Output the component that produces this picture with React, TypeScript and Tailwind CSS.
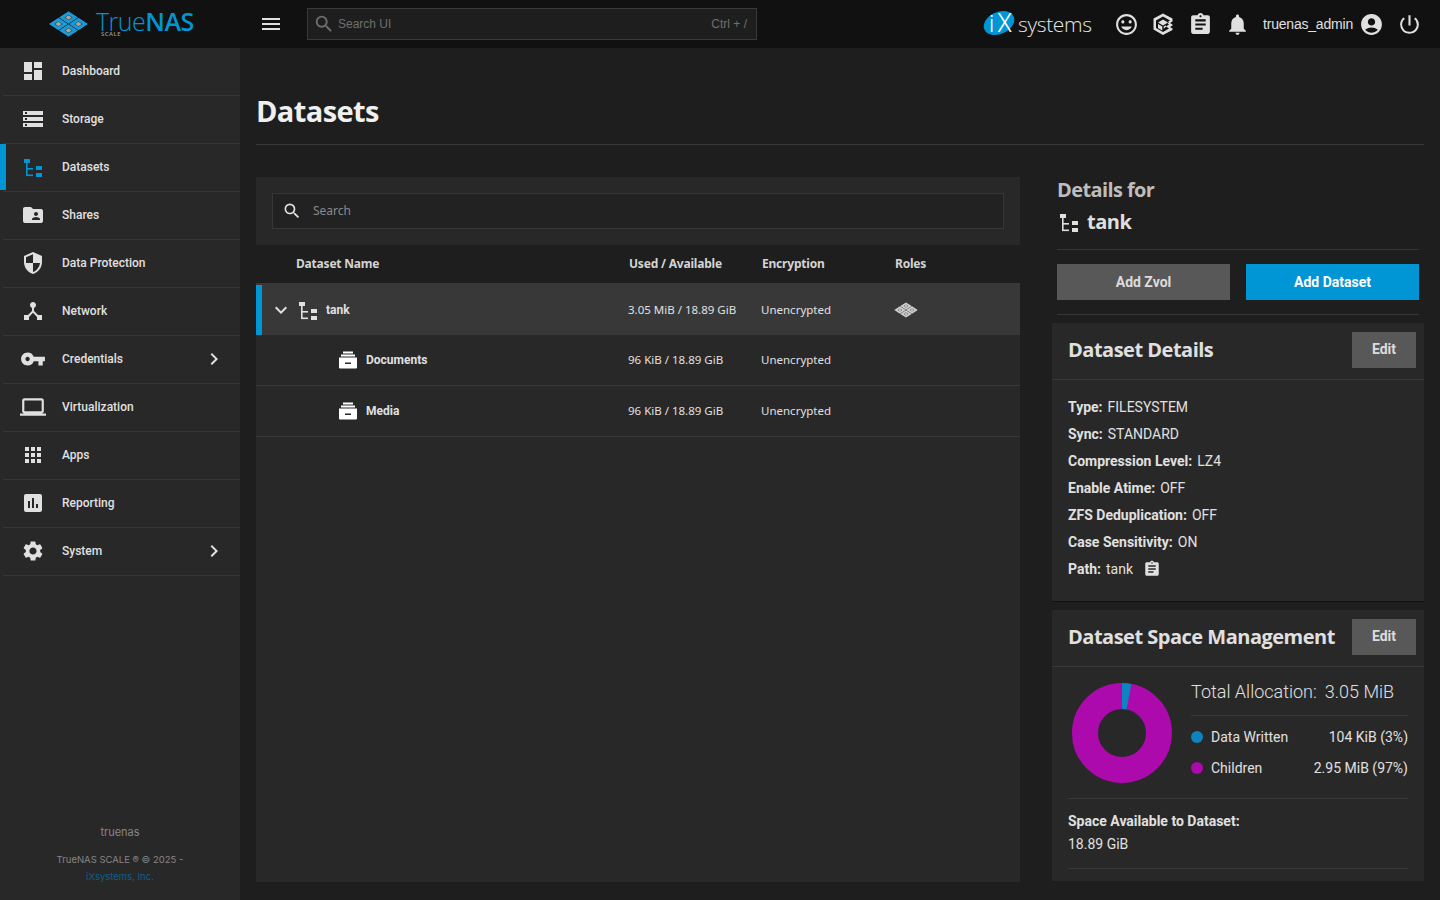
import type { ReactNode } from 'react'
import {
  MdAccountCircle,
  MdApps,
  MdAssessment,
  MdAssignment,
  MdChevronRight,
  MdDashboard,
  MdDeviceHub,
  MdExpandMore,
  MdFolderShared,
  MdLaptop,
  MdMenu,
  MdNotifications,
  MdPowerSettingsNew,
  MdSearch,
  MdSecurity,
  MdSettings,
  MdStorage,
  MdTagFaces,
  MdVpnKey,
} from 'react-icons/md'

function DatasetIcon({ className }: { className?: string }) {
  return (
    <svg viewBox="0 0 24 24" fill="currentColor" className={className}>
      <rect x="3" y="4" width="6" height="4" />
      <rect x="5" y="8" width="1.6" height="13" />
      <rect x="5" y="13" width="7" height="1.6" />
      <rect x="5" y="19.5" width="7" height="1.6" />
      <rect x="15" y="11" width="6" height="4" />
      <rect x="15" y="18" width="6" height="4" />
    </svg>
  )
}

function ArchiveIcon() {
  return (
    <svg viewBox="0 0 18 18" fill="currentColor" className="h-[18px] w-[18px]">
      <rect x="4" y="0.5" width="10" height="2" />
      <rect x="2" y="3.5" width="14" height="2" />
      <path fillRule="evenodd" d="M0 6.5h18v10a1 1 0 0 1-1 1H1a1 1 0 0 1-1-1zM6 11.5v1.4h6v-1.4z" />
    </svg>
  )
}

function TruenasMark({ className, frame, inner }: { className?: string; frame: string; inner: string }) {
  const cells = [
    [0.05, 0.05],
    [2.05, 0.05],
    [0.05, 2.05],
    [2.05, 2.05],
  ]
  return (
    <svg viewBox="0 0 40 26" className={className}>
      <g transform="matrix(5 3.25 -5 3.25 20 0)">
        {cells.map(([x, y]) => (
          <g key={`${x}-${y}`}>
            <path
              fill={frame}
              fillRule="evenodd"
              d={`M${x} ${y}h1.9v1.9h-1.9zM${x + 0.55} ${y + 0.55}v0.8h0.8v-0.8z`}
            />
            <rect x={x + 0.62} y={y + 0.62} width="0.66" height="0.66" fill={inner} />
          </g>
        ))}
      </g>
    </svg>
  )
}

function TrueCommandIcon() {
  return (
    <svg viewBox="0 0 24 24" className="h-6 w-6" fill="#e0e0e0">
      <path
        fillRule="evenodd"
        d="M12 1.5 21.5 6.5v3L19 11l2.500 1.500v1L19 15l2.500 1.500v1.500L12 23 2.500 17.500v-11zM12 4.500 5 8.500v7.500l7 4 6-3.500-3-2 3-2-1.500-1 1.500-1-1-.8 2-1.200z"
      />
      <path d="M12 7.500 17 10.500 12 13.500 7 10.500zM7 12l4.300 2.500v4L7 16zM12.700 14.500 15 13.200v1.500l-2.300 2z" />
    </svg>
  )
}

function IxLogo() {
  return (
    <svg viewBox="0 0 112 30" className="h-[30px] w-[112px]">
      <ellipse cx="16" cy="14" rx="16" ry="11" transform="rotate(-24 16 14)" fill="#0095d5" />
      <text x="6" y="23" fontFamily="Roboto, sans-serif" fontSize="23" fontWeight="300" fill="#fff">
        i
      </text>
      <text x="14" y="23" fontFamily="Roboto, sans-serif" fontSize="25" fontWeight="300" fill="#fff">
        X
      </text>
      <text x="35" y="23" fontFamily="'Open Sans', sans-serif" fontSize="21" fontWeight="300" fill="#e6e6e6" textLength="74">
        systems
      </text>
    </svg>
  )
}

const navItems: { label: string; icon: ReactNode; active?: boolean; more?: boolean }[] = [
  { label: 'Dashboard', icon: <MdDashboard size={24} /> },
  { label: 'Storage', icon: <MdStorage size={24} /> },
  { label: 'Datasets', icon: <DatasetIcon className="h-6 w-6 text-[#0095d5]" />, active: true },
  { label: 'Shares', icon: <MdFolderShared size={24} /> },
  { label: 'Data Protection', icon: <MdSecurity size={24} /> },
  { label: 'Network', icon: <MdDeviceHub size={24} /> },
  { label: 'Credentials', icon: <MdVpnKey size={26} />, more: true },
  { label: 'Virtualization', icon: <MdLaptop size={26} /> },
  { label: 'Apps', icon: <MdApps size={24} /> },
  { label: 'Reporting', icon: <MdAssessment size={24} /> },
  { label: 'System', icon: <MdSettings size={24} />, more: true },
]

function Sidebar() {
  return (
    <aside className="flex w-[240px] shrink-0 flex-col bg-[#282828] font-['Roboto',sans-serif]">
      {navItems.map((item) => (
        <div key={item.label} className="relative ml-[3px] flex h-12 items-center border-b border-[#363636] pb-px text-[#e0e0e0]">
          {item.active && <div className="absolute -left-[3px] top-0 bottom-px w-[6px] bg-[#0095d5]" />}
          <div className="flex w-[59px] items-center justify-center pl-[-1px]">{item.icon}</div>
          <span className="text-[12px] font-medium">{item.label}</span>
          {item.more && <MdChevronRight size={24} className="ml-auto mr-[14px]" />}
        </div>
      ))}
      <div className="mt-auto flex flex-col items-center pb-[15px] font-['Inter',sans-serif] text-[#868686]">
        <div className="text-[11px] leading-4">truenas</div>
        <div className="mt-[12px] text-[9.5px] leading-4">TrueNAS SCALE ® © 2025 -</div>
        <div className="mt-px text-[9.5px] leading-4 text-[#0d5f8a]">iXsystems, Inc.</div>
      </div>
    </aside>
  )
}

function Topbar() {
  return (
    <header className="flex h-12 items-center bg-[#111111] font-['Roboto',sans-serif] text-[#e0e0e0]">
      <div className="flex w-[240px] shrink-0 items-center pl-[48px]">
        <TruenasMark className="h-[26px] w-[41px]" frame="#1b9ad6" inner="#a8a8a8" />
        <div className="relative ml-[7px] -mt-[6px] font-['Open_Sans',sans-serif] text-[25px] leading-8 text-[#0095d5]">
          <span className="font-light tracking-[-0.5px]">True</span>
          <span className="font-semibold tracking-[-0.5px]">NAS</span>
          <span className="absolute left-[5px] top-[26px] text-[6px] font-semibold leading-none tracking-[0.5px] text-[#9a9a9a]">
            SCALE
          </span>
        </div>
      </div>
      <MdMenu size={24} className="ml-[19px]" />
      <div className="ml-[24px] flex h-8 w-[450px] items-center border border-[#3a3a3a] bg-[#1e1e1e] pl-[5px] pr-[9px] font-['Liberation_Sans',sans-serif] text-[12px] text-[#6f6f6f]">
        <MdSearch size={22} />
        <span className="ml-[3px]">Search UI</span>
        <span className="ml-auto">Ctrl + /</span>
      </div>
      <div className="ml-auto flex items-center pr-[18px]">
        <IxLogo />
        <MdTagFaces size={25} className="ml-[19px]" />
        <div className="ml-[12px]">
          <TrueCommandIcon />
        </div>
        <MdAssignment size={25} className="ml-[13px]" />
        <MdNotifications size={25} className="ml-[12px]" />
        <span className="ml-[13px] font-['Liberation_Sans',sans-serif] text-[14px] tracking-[-0.2px]">truenas_admin</span>
        <MdAccountCircle size={25} className="ml-[6px]" />
        <MdPowerSettingsNew size={25} className="ml-[13px]" />
      </div>
    </header>
  )
}

const rows = [
  { name: 'Documents', used: '96 KiB / 18.89 GiB' },
  { name: 'Media', used: '96 KiB / 18.89 GiB' },
]

function DatasetTree() {
  return (
    <section className="flex w-[764px] shrink-0 flex-col bg-[#282828] text-[#e0e0e0]">
      <div className="px-4 py-4">
        <div className="flex h-9 items-center border border-[#363636] bg-[#222222] pl-[9px] text-[12px] text-[#8a8a8a]">
          <MdSearch size={20} className="text-[#e0e0e0]" />
          <span className="ml-[11px] font-['Noto_Sans',sans-serif]">Search</span>
        </div>
      </div>
      <div className="flex h-[38px] items-center bg-[#1e1e1e] text-[12px] font-bold tracking-[-0.2px] text-[#d4d4d4]">
        <span className="ml-[40px] w-[333px]">Dataset Name</span>
        <span className="w-[133px]">Used / Available</span>
        <span className="w-[133px]">Encryption</span>
        <span>Roles</span>
      </div>
      <div className="flex h-[52px] items-center bg-[#383838] pt-[2px] font-['Noto_Sans',sans-serif] text-[11.5px]">
        <div className="flex h-[50px] w-[6px] items-center bg-[#0095d5]" />
        <MdExpandMore size={24} className="ml-[7px]" />
        <DatasetIcon className="ml-[3px] h-6 w-6" />
        <span className="ml-[6px] w-[302px] font-['Roboto',sans-serif] text-[12px] font-bold">tank</span>
        <span className="w-[133px]">3.05 MiB / 18.89 GiB</span>
        <span className="w-[133px]">Unencrypted</span>
        <TruenasMark className="h-[16px] w-[24px]" frame="#d0d0d0" inner="#d0d0d0" />
      </div>
      {rows.map((row) => (
        <div key={row.name} className="flex h-[51px] items-center border-b border-[#383838] font-['Noto_Sans',sans-serif] text-[11.5px]">
          <div className="ml-[83px] text-white">
            <ArchiveIcon />
          </div>
          <span className="ml-[9px] w-[262px] font-['Roboto',sans-serif] text-[12px] font-bold">{row.name}</span>
          <span className="w-[133px]">{row.used}</span>
          <span>Unencrypted</span>
        </div>
      ))}
    </section>
  )
}

function CardHeader({ title }: { title: string }) {
  return (
    <div className="flex h-[57px] items-center justify-between border-b border-[#383838] pl-4 pr-2 pb-[3px]">
      <h3 className="font-['Open_Sans',sans-serif] text-[20px] font-bold tracking-[-0.5px] text-[#e0e0e0]">{title}</h3>
      <button className="h-9 w-16 bg-[#585858] text-[14px] font-bold text-[#dcdcdc]">Edit</button>
    </div>
  )
}

const details: [string, string][] = [
  ['Type:', 'FILESYSTEM'],
  ['Sync:', 'STANDARD'],
  ['Compression Level:', 'LZ4'],
  ['Enable Atime:', 'OFF'],
  ['ZFS Deduplication:', 'OFF'],
  ['Case Sensitivity:', 'ON'],
]

function DetailsPanel() {
  return (
    <aside className="flex w-[372px] shrink-0 flex-col font-['Roboto',sans-serif] text-[14px] text-[#e0e0e0]">
      <div className="mx-[5px] border-b border-[#363636] pb-[14px]">
        <div className="font-['Open_Sans',sans-serif] text-[20px] font-bold leading-[26px] tracking-[-0.6px] text-[#bdbdbd]">
          Details for
        </div>
        <div className="mt-[6px] flex h-[26px] items-center font-['Open_Sans',sans-serif] text-[20px] font-bold tracking-[-0.5px]">
          <DatasetIcon className="mr-[6px] h-6 w-6 shrink-0" />
          tank
        </div>
      </div>
      <div className="mx-[5px] flex gap-4 border-b border-[#363636] py-[14px]">
        <button className="h-9 flex-1 bg-[#585858] font-bold text-[#dcdcdc]">Add Zvol</button>
        <button className="h-9 flex-1 bg-[#0095d5] font-bold text-white">Add Dataset</button>
      </div>
      <div className="mt-2 h-[279px] border-b border-[#111] bg-[#282828]">
        <CardHeader title="Dataset Details" />
        <div className="flex flex-col gap-[7px] px-4 pt-[17px] leading-5">
          {details.map(([label, value]) => (
            <div key={label}>
              <b className="mr-[5px]">{label}</b>
              {value}
            </div>
          ))}
          <div className="flex items-center">
            <b className="mr-[5px]">Path:</b>tank
            <MdAssignment size={18} className="ml-[10px]" />
          </div>
        </div>
      </div>
      <div className="mt-2 h-[271px] bg-[#282828]">
        <CardHeader title="Dataset Space Management" />
        <div className="mx-4 flex h-[132px] items-start border-b border-[#383838] pt-4">
          <svg viewBox="0 0 100 100" className="ml-1 h-[100px] w-[100px] shrink-0">
            <circle cx="50" cy="50" r="37" fill="none" stroke="#ad0aad" strokeWidth="26" />
            <circle
              cx="50"
              cy="50"
              r="37"
              fill="none"
              stroke="#0d83c0"
              strokeWidth="26"
              strokeDasharray="7 232"
              transform="rotate(-90 50 50)"
            />
          </svg>
          <div className="ml-[19px] flex-1">
            <div className="-mt-[5px] border-b border-[#383838] pb-[9px] text-[18px] font-light leading-[28px]">
              <span className="mr-2">Total Allocation:</span>3.05 MiB
            </div>
            <div className="mt-[11px] flex h-5 items-center">
              <span className="h-3 w-3 rounded-full bg-[#0d83c0]" />
              <span className="ml-2">Data Written</span>
              <span className="ml-auto">104 KiB (3%)</span>
            </div>
            <div className="mt-[11px] flex h-5 items-center">
              <span className="h-3 w-3 rounded-full bg-[#ad0aad]" />
              <span className="ml-2">Children</span>
              <span className="ml-auto">2.95 MiB (97%)</span>
            </div>
          </div>
        </div>
        <div className="mx-4 border-b border-[#383838] pb-[12px] pt-[11px] leading-[23px]">
          <div className="font-bold">Space Available to Dataset:</div>
          <div>18.89 GiB</div>
        </div>
      </div>
    </aside>
  )
}

export default function App() {
  return (
    <div className="flex h-screen w-full flex-col overflow-hidden bg-[#1e1e1e]">
      <Topbar />
      <div className="flex flex-1 overflow-hidden">
        <Sidebar />
        <main className="flex flex-1 flex-col px-4">
          <div className="flex h-[97px] items-end border-b border-[#383838] pb-[13px]">
            <h1 className="font-['Open_Sans',sans-serif] text-[29px] font-bold leading-10 tracking-[-0.6px] text-[#f0f0f0]">
              Datasets
            </h1>
          </div>
          <div className="mt-8 flex h-[705px] gap-8">
            <DatasetTree />
            <DetailsPanel />
          </div>
        </main>
      </div>
    </div>
  )
}
